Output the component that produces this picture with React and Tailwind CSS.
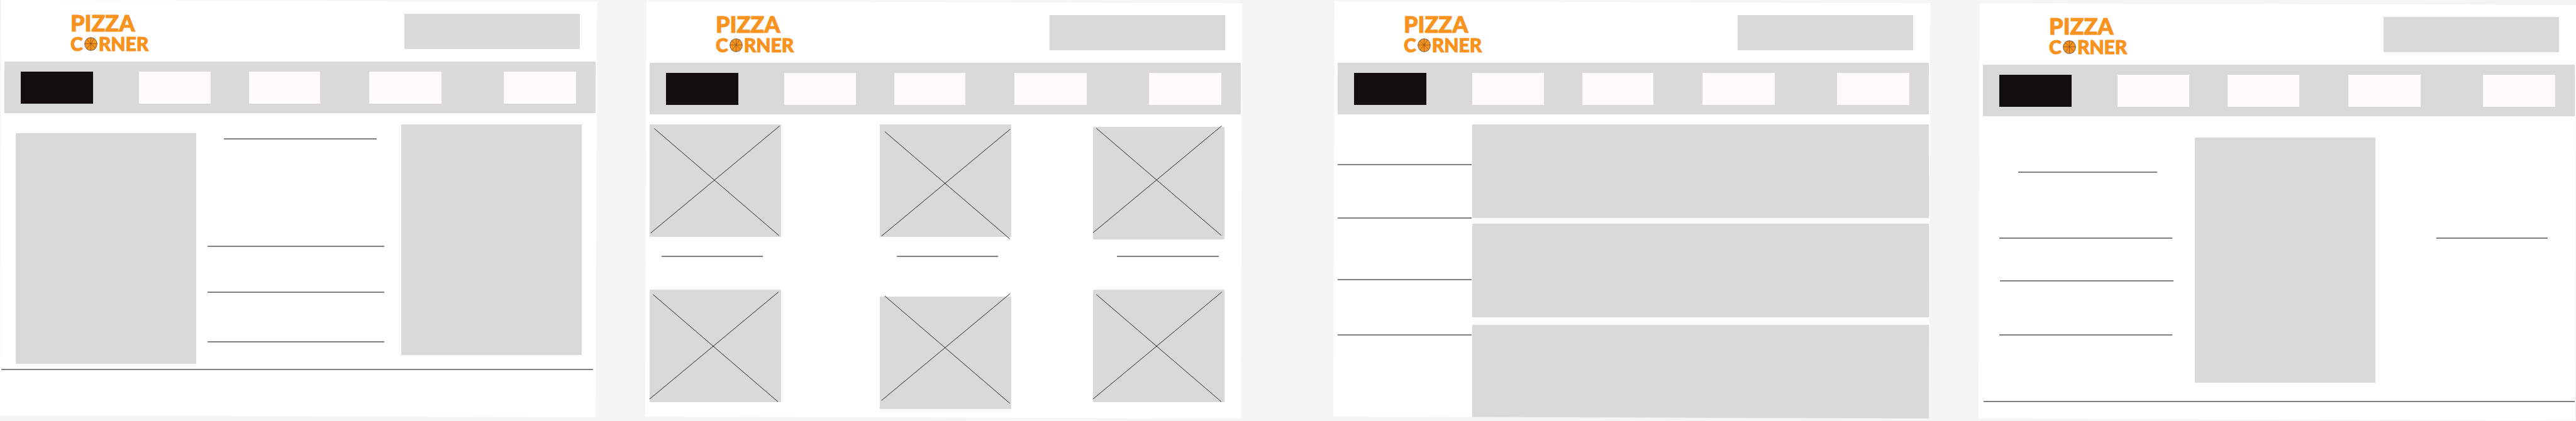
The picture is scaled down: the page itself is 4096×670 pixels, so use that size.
const TAB_LABELS = ["Home", "Menu", "Order", "About", "Contact"];

function Logo() {
  return (
    <div
      className="w-[140px] font-['Lato',sans-serif] font-black text-[#f7931e] [-webkit-text-stroke:1px_#f7931e]"
      aria-label="Pizza Corner"
    >
      <div className="text-[36px] leading-[28px]">PIZZA</div>
      <div className="flex items-center text-[30px] leading-[38px]">
        <span>C</span>
        <svg viewBox="0 0 26 27" className="mx-0.5 mt-0.5 h-[22px] w-[21px] shrink-0" aria-hidden="true">
          <ellipse cx="13" cy="13.5" rx="12.2" ry="12.7" fill="#f7931e" stroke="#80664a" strokeWidth="1.3" />
          <path d="M13 1v25M1 13h24M4.5 4.5l8.5 8.5 7-10.5M5 23l8-10 9 9" fill="none" stroke="#7a4a12" strokeWidth="0.8" />
        </svg>
        <span>RNER</span>
      </div>
    </div>
  );
}

function Header() {
  return (
    <>
      <header className="grid h-[98px] grid-cols-[105fr_531fr_279fr_27fr] items-start pt-[22px]">
        <div className="col-start-2">
          <Logo />
        </div>
        <input type="search" aria-label="Search" className="h-14 w-full rounded-none bg-[#d9d9d9] outline-none" />
      </header>
      <nav className="mr-[2px] grid h-[82px] grid-cols-[26fr_115fr_73fr_114fr_61fr_113fr_78fr_115fr_99fr_115fr_31fr] items-start bg-[#d9d9d9] pt-4">
        {TAB_LABELS.map((label, i) => (
          <button
            key={label}
            type="button"
            aria-label={label}
            className={
              [
                "col-start-2 bg-[#130f0e]",
                "col-start-4 bg-[#fffbfa]",
                "col-start-6 bg-[#fffbfa]",
                "col-start-8 bg-[#fffbfa]",
                "col-start-10 bg-[#fffbfa]",
              ][i] + " row-start-1 h-[51px]"
            }
          />
        ))}
      </nav>
    </>
  );
}

function Screen({ className, children }) {
  return (
    <article
      className={
        "h-[664px] bg-white pl-[7px] [clip-path:polygon(2px_0px,100%_3px,calc(100%_-_2px)_100%,0px_calc(100%_-_3px))] " +
        className
      }
    >
      <Header />
      {children}
    </article>
  );
}

function Rule({ className = "" }) {
  return <div className={"h-[2px] bg-[#808080] " + className} />;
}

function Crossed({ x, y, className = "" }) {
  return (
    <div className={"h-[179px] bg-[#d9d9d9] " + className}>
      <svg viewBox="0 0 209 179" preserveAspectRatio="none" className="block h-full w-full overflow-visible" aria-hidden="true">
        <path
          d={`M${x} ${y}l198.7 170.7M${x + 199.5} ${y - 4}l-204.8 170.3`}
          fill="none"
          stroke="#222"
          strokeWidth="1"
        />
      </svg>
    </div>
  );
}

function HomeScreen() {
  return (
    <Screen className="col-start-1">
      <div className="grid h-[407px] grid-cols-[18fr_287fr_326fr_287fr_24fr] items-start pt-[18px]">
        <div className="col-start-2 mt-[14px] h-[367px] bg-[#d9d9d9]" />
        <div className="grid grid-cols-[18fr_26fr_243fr_12fr_27fr] pt-[22px]">
          <Rule className="col-start-3" />
          <Rule className="col-span-3 col-start-2 mt-[169px]" />
          <Rule className="col-span-3 col-start-2 mt-[71px]" />
          <Rule className="col-span-3 col-start-2 mt-[77px]" />
        </div>
        <div className="h-[367px] bg-[#d9d9d9]" />
      </div>
      <Rule className="-ml-[5px] mr-[6px]" />
    </Screen>
  );
}

function MenuScreen() {
  return (
    <Screen className="col-start-3 mt-[2px]">
      <div className="grid grid-cols-[209fr_157fr_209fr_130fr_209fr_28fr] items-start pt-4">
        <Crossed x={7.2} y={6.4} className="col-start-1" />
        <Crossed x={7.9} y={11.5} className="col-start-3" />
        <Crossed x={5.3} y={2.1} className="col-start-5 mt-1" />
      </div>
      <div className="grid grid-cols-[19fr_161fr_213fr_161fr_189fr_162fr_37fr] pt-[26px]">
        <Rule className="col-start-2" />
        <Rule className="col-start-4" />
        <Rule className="col-start-6" />
      </div>
      <div className="grid grid-cols-[209fr_157fr_209fr_130fr_209fr_28fr] items-start pt-[52px]">
        <Crossed x={5.3} y={7.7} className="col-start-1" />
        <Crossed x={7.9} y={-0.9} className="col-start-3 mt-[11px]" />
        <Crossed x={5.3} y={7.7} className="col-start-5" />
      </div>
    </Screen>
  );
}

function ListScreen() {
  return (
    <Screen className="col-start-5 mt-[2px]">
      <div className="grid grid-cols-[213fr_1fr_726fr_2fr] items-start pt-4">
        <div className="pt-[63px]">
          <Rule />
          <Rule className="mt-[83px]" />
          <Rule className="mt-[96px]" />
          <Rule className="mt-[86px]" />
        </div>
        <div className="col-start-3">
          <div className="h-[149px] bg-[#d9d9d9]" />
          <div className="mt-[9px] h-[149px] bg-[#d9d9d9]" />
          <div className="mt-3 h-[149px] bg-[#d9d9d9]" />
        </div>
      </div>
    </Screen>
  );
}

function AboutScreen() {
  return (
    <Screen className="col-start-7 mt-[5px]">
      <div className="grid h-[453px] grid-cols-[26fr_275fr_36fr_286fr_97fr_177fr_45fr] items-start pt-[34px]">
        <div className="col-start-2 pt-[54px]">
          <div className="grid grid-cols-[30fr_221fr_24fr]">
            <Rule className="col-start-2" />
          </div>
          <Rule className="mt-[103px]" />
          <Rule className="ml-px -mr-[2px] mt-[66px]" />
          <Rule className="mt-[84px]" />
        </div>
        <div className="col-start-4 h-[390px] bg-[#d9d9d9]" />
        <Rule className="col-start-6 mt-[159px]" />
      </div>
      <Rule className="ml-px mr-[2px]" />
    </Screen>
  );
}

export default function App() {
  return (
    <main className="grid min-h-screen grid-cols-[949fr_77fr_949fr_145fr_949fr_77fr_950fr] items-start overflow-hidden bg-[#f5f5f5]">
      <HomeScreen />
      <MenuScreen />
      <ListScreen />
      <AboutScreen />
    </main>
  );
}
